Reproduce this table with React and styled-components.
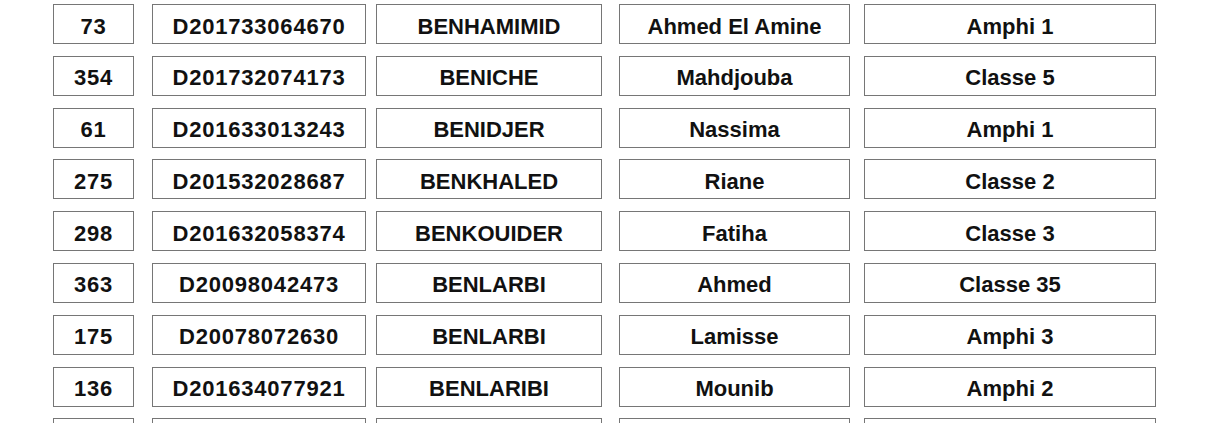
import React from "react";
import styled, { createGlobalStyle } from "styled-components";

const GlobalStyle = createGlobalStyle`
  body {
    margin: 0;
    background: #ffffff;
    font-family: "Liberation Sans", Arial, sans-serif;
  }
`;

const Sheet = styled.div`
  display: flex;
  flex-direction: column;
  gap: 11.8px;
  padding: 4px 0 0 53px;
  height: 423px;
  overflow: hidden;
  box-sizing: border-box;
`;

const Row = styled.div`
  display: flex;
  flex-direction: row;
  flex-shrink: 0;
`;

const Cell = styled.div`
  box-sizing: border-box;
  width: ${(p) => p.$width}px;
  margin-left: ${(p) => p.$offset}px;
  height: 40px;
  padding-top: 5px;
  border: 1px solid #767676;
  display: flex;
  align-items: center;
  justify-content: center;
  font-size: 22px;
  font-weight: 700;
  color: #111111;
  letter-spacing: ${(p) => (p.$numeric ? "0.8px" : "0")};
  white-space: nowrap;
`;

const columns = [
  { key: "num", width: 81, offset: 0, numeric: true },
  { key: "id", width: 214, offset: 18, numeric: true },
  { key: "last", width: 226, offset: 10 },
  { key: "first", width: 231, offset: 17 },
  { key: "room", width: 292, offset: 14 },
];

const students = [
  { num: "73", id: "D201733064670", last: "BENHAMIMID", first: "Ahmed El Amine", room: "Amphi 1" },
  { num: "354", id: "D201732074173", last: "BENICHE", first: "Mahdjouba", room: "Classe 5" },
  { num: "61", id: "D201633013243", last: "BENIDJER", first: "Nassima", room: "Amphi 1" },
  { num: "275", id: "D201532028687", last: "BENKHALED", first: "Riane", room: "Classe 2" },
  { num: "298", id: "D201632058374", last: "BENKOUIDER", first: "Fatiha", room: "Classe 3" },
  { num: "363", id: "D20098042473", last: "BENLARBI", first: "Ahmed", room: "Classe 35" },
  { num: "175", id: "D20078072630", last: "BENLARBI", first: "Lamisse", room: "Amphi 3" },
  { num: "136", id: "D201634077921", last: "BENLARIBI", first: "Mounib", room: "Amphi 2" },
  { num: "", id: "", last: "", first: "", room: "" },
];

const App = () => {
  return (
    <>
      <GlobalStyle />
      <Sheet>
        {students.map((s, i) => (
          <Row key={i}>
            {columns.map((c) => (
              <Cell
                key={c.key}
                $width={c.width}
                $offset={c.offset}
                $numeric={c.numeric}
              >
                {s[c.key]}
              </Cell>
            ))}
          </Row>
        ))}
      </Sheet>
    </>
  );
};

export default App;
